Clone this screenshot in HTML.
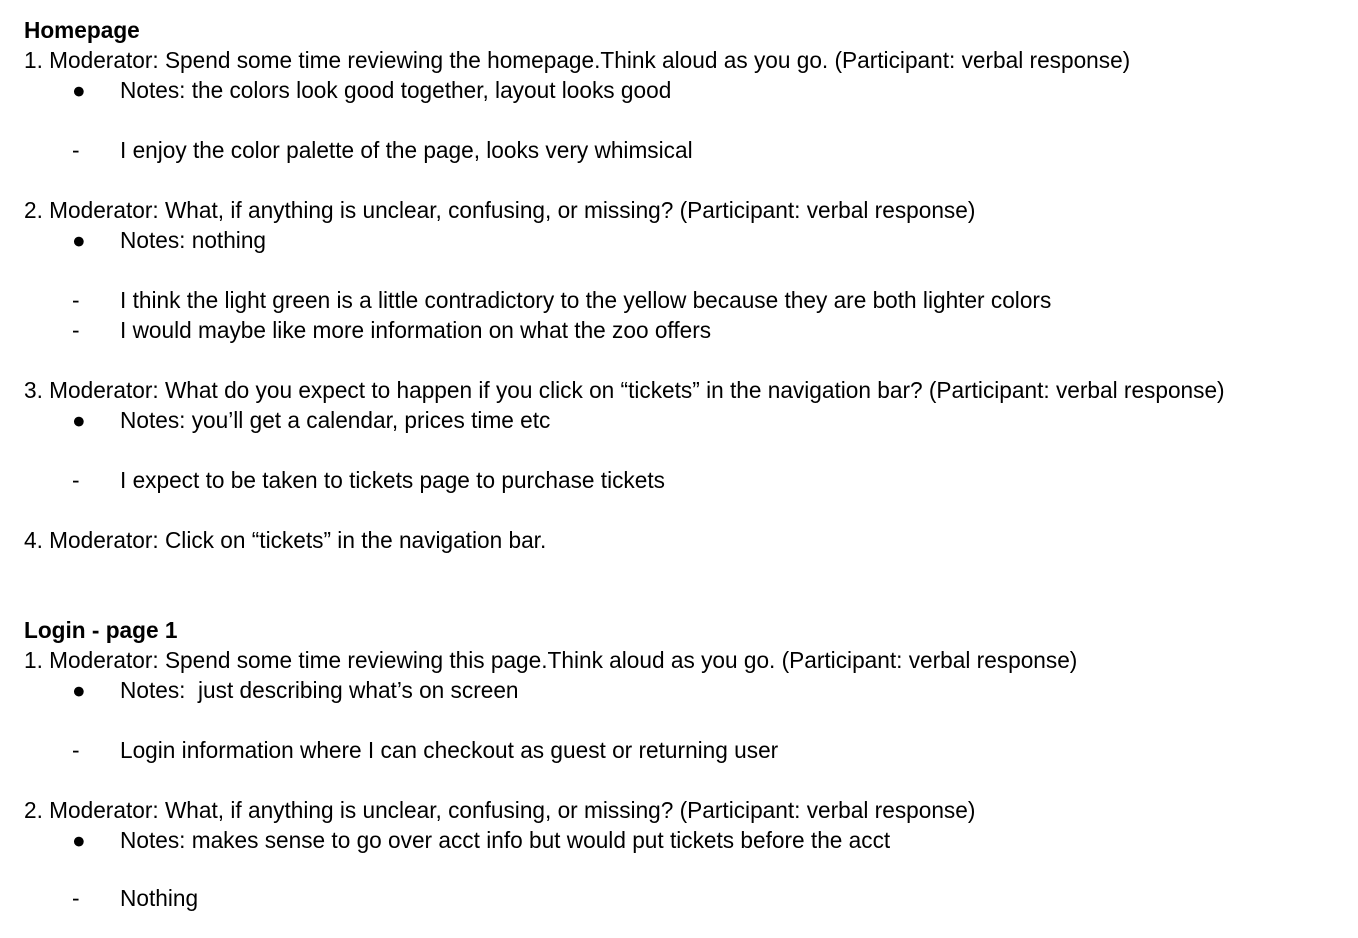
<!DOCTYPE html>
<html><head><meta charset="utf-8"><style>
body{margin:0;background:#fff;width:1358px;height:938px;position:relative;overflow:hidden;font-family:"Liberation Sans",Arial,sans-serif;font-size:22.65px;color:#000}
.l{position:absolute;line-height:26px;white-space:pre}
b{font-weight:bold}
</style></head><body>
<div class="l" style="left:24px;top:17px"><b>Homepage</b></div>
<div class="l" style="left:24px;top:47px">1. Moderator: Spend some time reviewing the homepage.Think aloud as you go. (Participant: verbal response)</div>
<div class="l" style="left:72px;top:77px">●</div><div class="l" style="left:120px;top:77px">Notes: the colors look good together, layout looks good</div>
<div class="l" style="left:72px;top:137px">-</div><div class="l" style="left:120px;top:137px">I enjoy the color palette of the page, looks very whimsical</div>
<div class="l" style="left:24px;top:197px">2. Moderator: What, if anything is unclear, confusing, or missing? (Participant: verbal response)</div>
<div class="l" style="left:72px;top:227px">●</div><div class="l" style="left:120px;top:227px">Notes: nothing</div>
<div class="l" style="left:72px;top:287px">-</div><div class="l" style="left:120px;top:287px">I think the light green is a little contradictory to the yellow because they are both lighter colors</div>
<div class="l" style="left:72px;top:317px">-</div><div class="l" style="left:120px;top:317px">I would maybe like more information on what the zoo offers</div>
<div class="l" style="left:24px;top:377px">3. Moderator: What do you expect to happen if you click on “tickets” in the navigation bar? (Participant: verbal response)</div>
<div class="l" style="left:72px;top:407px">●</div><div class="l" style="left:120px;top:407px">Notes: you’ll get a calendar, prices time etc</div>
<div class="l" style="left:72px;top:467px">-</div><div class="l" style="left:120px;top:467px">I expect to be taken to tickets page to purchase tickets</div>
<div class="l" style="left:24px;top:527px">4. Moderator: Click on “tickets” in the navigation bar.</div>
<div class="l" style="left:24px;top:617px"><b>Login - page 1</b></div>
<div class="l" style="left:24px;top:647px">1. Moderator: Spend some time reviewing this page.Think aloud as you go. (Participant: verbal response)</div>
<div class="l" style="left:72px;top:677px">●</div><div class="l" style="left:120px;top:677px">Notes:  just describing what’s on screen</div>
<div class="l" style="left:72px;top:737px">-</div><div class="l" style="left:120px;top:737px">Login information where I can checkout as guest or returning user</div>
<div class="l" style="left:24px;top:797px">2. Moderator: What, if anything is unclear, confusing, or missing? (Participant: verbal response)</div>
<div class="l" style="left:72px;top:827px">●</div><div class="l" style="left:120px;top:827px">Notes: makes sense to go over acct info but would put tickets before the acct</div>
<div class="l" style="left:72px;top:885px">-</div><div class="l" style="left:120px;top:885px">Nothing</div>
</body></html>
